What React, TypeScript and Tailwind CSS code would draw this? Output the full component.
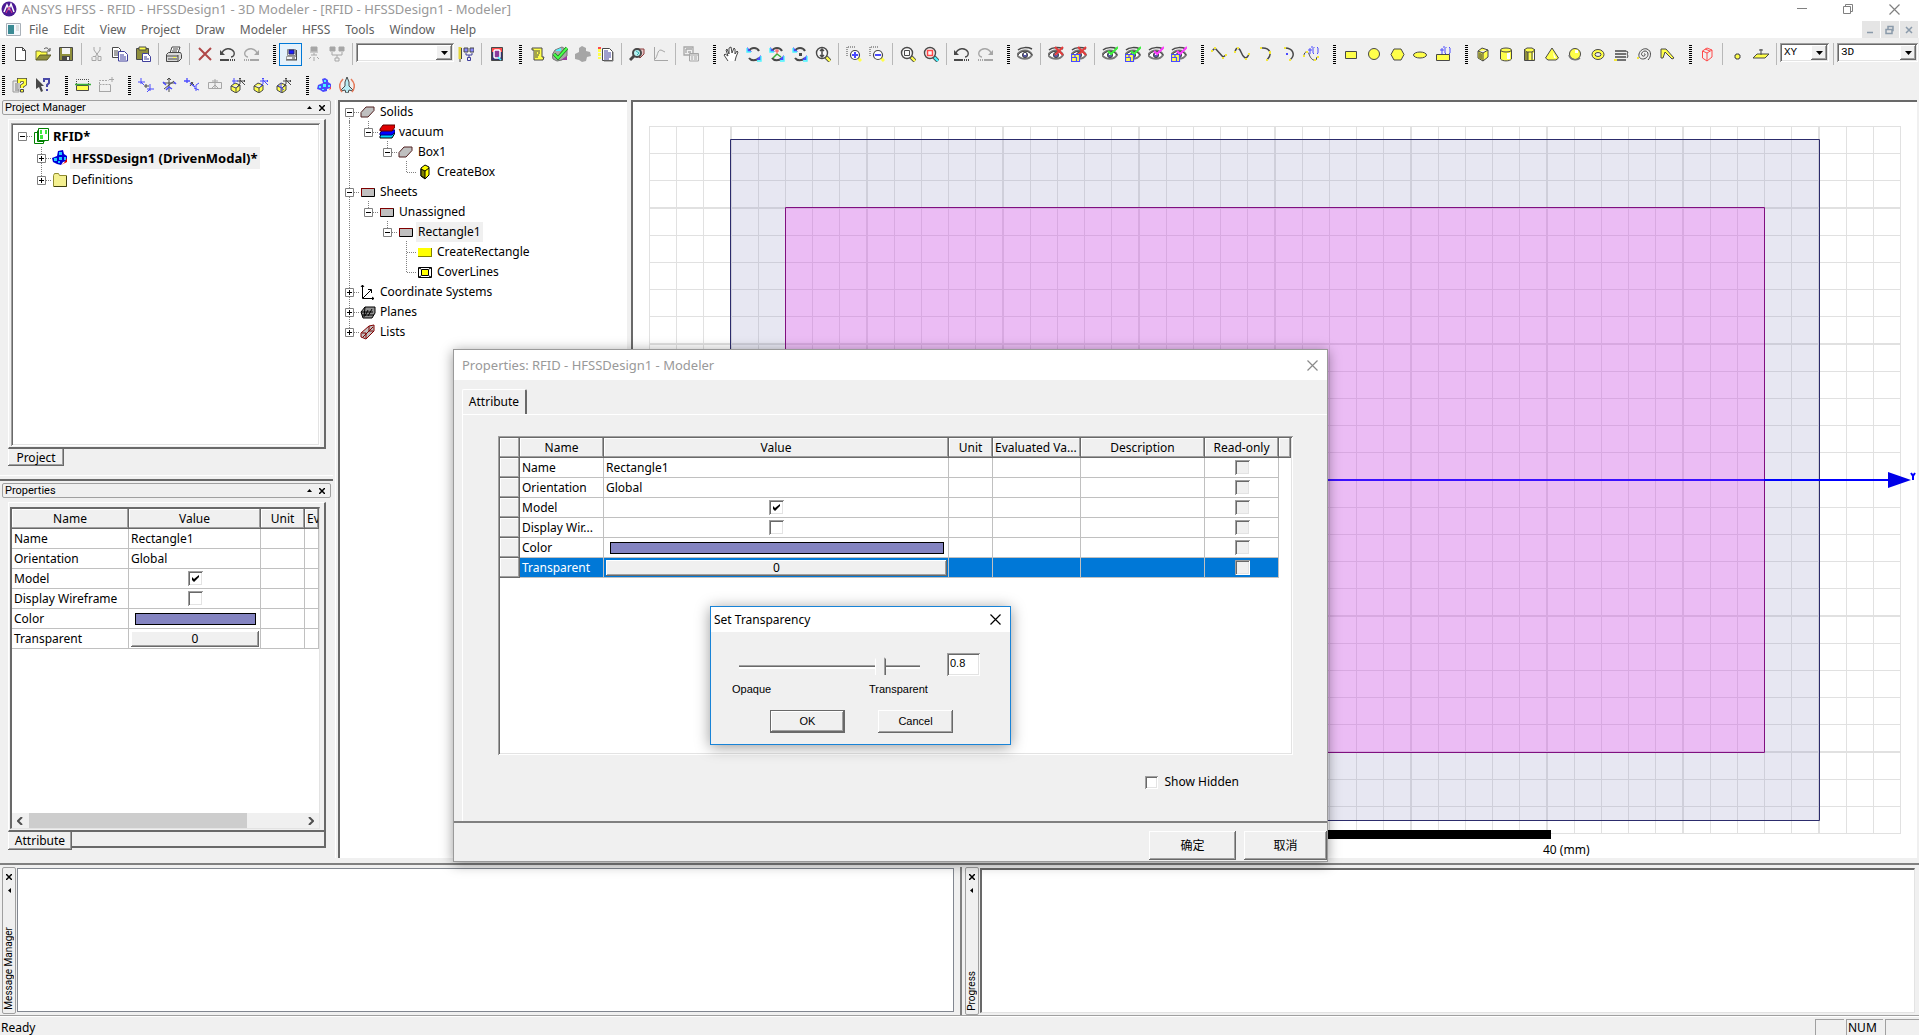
import { clsx } from "clsx";
import { useState, type ReactNode } from "react";

const DARK = "#484848";
const GRAY = "#a6a6a6";
const YELLOW = "#ffff4a";
const BLUE = "#4a4aff";

const RAISED =
    "bg-[#f0f0f0] shadow-[inset_-1px_-1px_#696969,inset_1px_1px_#ffffff,inset_-2px_-2px_#a0a0a0]";
const SUNKEN =
    "shadow-[inset_1px_1px_#a0a0a0,inset_-1px_-1px_#ffffff,inset_2px_2px_#696969,inset_-2px_-2px_#e3e3e3]";

/* ---------- icon parts ---------- */

const eye = (
    <>
        <path d="M1 4C4 1 11 1 15 3" stroke={DARK} strokeWidth="1.5" fill="none" />
        <path d="M0 9C4 3 12 3 15 9C12 14 4 14 0 9Z" fill="#fff" stroke="#777" strokeWidth="2" />
        <path d="M1 9C4 4 12 4 15 9" stroke={DARK} strokeWidth="1" fill="none" />
        <circle cx="8" cy="9" r="2.6" fill="#5a5aa8" stroke={DARK} />
        <path d="M7 7h2v2h-2z" fill="#fff" />
    </>
);

const lens = (handle = YELLOW) => (
    <>
        <path d="M11 11l4 4" stroke={DARK} strokeWidth="4" />
        <path d="M11 11l4 4" stroke={handle} strokeWidth="2.4" />
        <circle cx="7" cy="7" r="5.5" fill="#f8f8f8" stroke={DARK} strokeWidth="1.4" />
    </>
);

const smallLens = (
    <>
        <path d="M1 10V1H10" stroke={DARK} strokeDasharray="1 1" fill="none" />
        <path d="M12 12l3 3" stroke={YELLOW} strokeWidth="3" />
        <circle cx="9" cy="9" r="4.5" fill="#fff" stroke={DARK} strokeWidth="1.2" />
    </>
);

const spin = (
    <>
        <path d="M3 5C5 1 11 1 13 5M3 12C5 15 10 15 13 12" stroke={DARK} strokeWidth="2" fill="none" />
        <path d="M1 1v5h5z" fill={BLUE} />
        <path d="M1 2v4h4" stroke="#4af4ff" strokeWidth="1.4" fill="none" />
        <path d="M15 9v5h-5z" fill={BLUE} />
        <path d="M15 10v5h-4" stroke="#4af4ff" strokeWidth="1.4" fill="none" />
    </>
);

const undoShape = (color: string) => (
    <>
        <path d="M2 7C4 2 11 1 14 6C15 9 13 11 11 11" stroke={color} strokeWidth="1.4" fill="none" />
        <path d="M0 4v5h5z" fill={color} />
        <path d="M0 14h9M10 14h1M12 14h1M14 14h1" stroke={color} strokeWidth="2" />
    </>
);

const redoShape = (color: string) => (
    <>
        <path d="M14 7C12 2 5 1 2 6C1 9 3 11 5 11" stroke={color} strokeWidth="1.4" fill="none" />
        <path d="M16 4v5h-5z" fill={color} />
        <path d="M7 14h9M5 14h1M3 14h1M1 14h1" stroke={color} strokeWidth="2" />
    </>
);

const cluster = (
    <>
        <path d="M2 8L7 6L6 2L9 1L12 3V5L15 7V11L11 12V14L7 15L4 13L1 12Z" fill={BLUE} />
        <path d="M9 15L15 12V9L13 13Z" fill="#ff4a4a" />
        <path d="M8 3h2v2h-2zM3 9h2v2H3zM7 7h3v3H7zM12 8h2v2h-2zM6 12h2v1H6z" fill="#4af4ff" />
    </>
);

const yellowBox = (
    <path d="M1 9L5 6L10 8V13L6 16L1 13ZM1 9L6 11L10 8M6 11V16" fill={YELLOW} stroke={DARK} />
);

const miniAxes = (color: string) => (
    <path d="M10 1v6M7 4h8M9 2l1-1l1 1M14 3l1 1l-1 1M10 7l-3 3M10 3l5 5" stroke={color} fill="none" />
);

const yellowPlate = (
    <path d="M0.5 8.5h8v7h-8zM0.5 11.5h5v4M4 8.5v3" fill={YELLOW} stroke={BLUE} strokeWidth="1.2" />
);

const tick = (color: string) => (
    <path d="M6 5l3 3L16 1" stroke={color} strokeWidth="2" fill="none" />
);

const cross = <path d="M7 1l8 8M15 1L7 9" stroke="#e53c3c" strokeWidth="2" fill="none" />;

const fx = (
    <path d="M8 1h2M7 8V2M5 4h4M10 2v5l1 1M14 1l1 1v5l-1 1M11 1v1" stroke={BLUE} fill="none" />
);

const icons: Record<string, ReactNode> = {
    new: <path d="M3.5 1.5h7l3 3v10h-10zM10.5 1.5v3h3" fill="#fff" stroke={DARK} />,
    open: (
        <>
            <path d="M1 14V5h4l1 1h6v3" fill={YELLOW} stroke="#77773a" />
            <path d="M1 14L5 9H16L12 14Z" fill="#8f8f3c" stroke="#5c5c2a" />
            <path d="M9 3c2-2 4-1 5 1M15 2v3h-3" stroke={DARK} fill="none" />
        </>
    ),
    save: (
        <>
            <path d="M1.5 1.5h13v13h-13z" fill="#8f8f3c" stroke={DARK} />
            <path d="M4 2h8v6H4z" fill="#f4f4f4" />
            <path d="M4 10h8v5H4z" fill={DARK} />
            <path d="M9 11h2v3H9z" fill="#f4f4f4" />
        </>
    ),
    cut: (
        <path d="M5 1v3l5 7M11 1v3l-5 7M4 10.5h3v4H3v-3zM9 10.5h3v4H9z" stroke={GRAY} fill="none" />
    ),
    copy: (
        <>
            <path d="M0.5 1.5h6l2 2v8h-8zM2 5h4M2 7h4M2 9h4" fill="#fff" stroke={DARK} />
            <path d="M6.5 5.5h6l3 3v6.5h-9z" fill="#fff" stroke="#3f3f9c" />
            <path d="M8 9h4M8 11h6M8 13h6" stroke="#3f3f9c" />
        </>
    ),
    paste: (
        <>
            <path d="M1.5 2.5h12v11h-12z" fill="#8f8f3c" stroke={DARK} />
            <path d="M4 1h7v3H4z" fill={YELLOW} stroke={DARK} />
            <path d="M7.5 7.5h5l3 3v5h-8z" fill="#fff" stroke="#3f3f9c" />
            <path d="M9 11h3M9 13h5" stroke="#3f3f9c" />
        </>
    ),
    print: (
        <>
            <path d="M4 7L6 1h8l-2 6" fill="#fff" stroke={DARK} />
            <path d="M7 3h5M6 5h5" stroke={DARK} />
            <path d="M0.5 8.5l2-2h12l1 2v4l-3 3h-12z" fill="#d8d8d8" stroke={DARK} />
            <path d="M1 10h11M2 13h9M12 9v6" stroke={DARK} />
            <path d="M7 11h3v1H7z" fill={YELLOW} />
        </>
    ),
    delete: <path d="M2 2l12 12M14 2L2 14" stroke="#b04848" strokeWidth="2" fill="none" />,
    undo: undoShape(DARK),
    redo: redoShape(GRAY),
    pc: (
        <>
            <path d="M4.5 3.5h8v6h-8z" fill="#e4e4e4" stroke="#8a8a8a" />
            <path d="M6 4h5v4H6z" fill="#1c1cff" stroke="#24246c" />
            <path d="M3.5 10.5h10v3h-10z" fill="#f4f4f4" stroke="#9a9a9a" />
            <path d="M13.5 4v10M3 14h11M9 12h3" stroke={DARK} />
        </>
    ),
    netOne: (
        <path d="M5 1h6v4H5zM5 3h6M4 6h8M8 7v2M5 9h6M5 11l-2 2M8 11v4M11 11l2 2" fill={GRAY} stroke={GRAY} />
    ),
    netTwo: (
        <>
            <path d="M1 1h5v4H1zM10 1h5v4h-5z" fill={GRAY} stroke={GRAY} />
            <path d="M3 6v3h10V6M8 9v3M6 12h4v3H6z" fill="none" stroke={GRAY} />
        </>
    ),
    pencilNet: (
        <>
            <path d="M2 1v12" stroke="#e5d63a" strokeWidth="3" />
            <path d="M3.5 2v11M2 13v3" stroke={DARK} />
            <path d="M6 2h4v4H6zM12 2h4v4h-4z" fill="#8a8aff" stroke={DARK} />
            <path d="M8 7v2h6V7M11 9v2M9.5 11.5h3v3h-3z" fill="none" stroke="#3f3f9c" />
        </>
    ),
    qLetter: (
        <>
            <path d="M2.5 1.5h11v13h-11z" fill="#33336c" stroke={DARK} />
            <path d="M3 2h10v4H3z" fill="#ff4a4a" />
            <path d="M6 4h4l1 1v6l-1 1H6l-1-1V5z" fill="#8a3a9c" stroke="#fff" strokeWidth="1.5" />
            <path d="M9 11l3 3" stroke="#4af4ff" strokeWidth="1.5" />
        </>
    ),
    scroll: (
        <>
            <path d="M3 2h10v9h2l-1 3H5V4H3z" fill={YELLOW} stroke={DARK} />
            <path d="M6 5h5M6 7h2M9 7h2M6 9h4M6 11h3" stroke={DARK} />
        </>
    ),
    validate: (
        <>
            <path d="M0 9l3-5l7-3l5 3v6l-5 4l-5 1l-4-2z" fill="#a8a8a8" stroke="#777" />
            <path d="M4 4l5-2v3H4z" fill="#4af4ff" />
            <path d="M9 14l6-4v4z" fill="#a03aa0" />
            <path d="M2 8l4 4L15 2" stroke="#1f7a1f" strokeWidth="3.5" fill="none" />
            <path d="M2 8l4 4L15 2" stroke="#4aff4a" strokeWidth="2" fill="none" />
        </>
    ),
    analyze: <path d="M0 8l4-2V2l3-2l4 2v3l4 1l1 4l-4 1l-1 4l-4 1l-3-2l-4-1z" fill={GRAY} />,
    notes: (
        <>
            <path d="M4.5 2.5h7l3 3v9h-10z" fill="#fff" stroke={DARK} />
            <path d="M6 5h4M6 7h7M6 9h7M6 11h7M6 13h5" stroke="#3f3f9c" />
            <path d="M1.5 3v10" stroke="#ffff4a" strokeWidth="3" strokeDasharray="3 1" />
            <path d="M0 1h3v2H0z" fill="#ff4a4a" />
            <path d="M15 6v9H6" stroke="#777" fill="none" />
        </>
    ),
    results: (
        <>
            <path d="M4 6l3-3h8v5l-4 4z" fill="#e8c8c8" stroke="#8a3a3a" />
            <circle cx="8" cy="7" r="4" fill="#b8f4f4" stroke={DARK} strokeWidth="2" />
            <path d="M5 10L1 14" stroke={DARK} strokeWidth="3" />
            <path d="M7 5l3 2l-2 2" stroke="#3ab0b0" fill="none" />
        </>
    ),
    plot: <path d="M2.5 1v13.5H16M3 13C6 10 5 4 9 4L13 6" stroke={GRAY} fill="none" />,
    layers: (
        <>
            <path d="M1 1h9v8H1zM3 3h6M3 3v4M5 6h3" fill="none" stroke={GRAY} strokeWidth="1.3" />
            <path d="M6.5 7.5h9v7.5h-9zM7 9h8M8 11h2M11 11h3M8 13h2M11 13h3" fill="#f0f0f0" stroke={GRAY} />
        </>
    ),
    pan: (
        <path
            d="M5 15L1 9L2 8L5 10L3 4L4 3L6 8V2L8 1L9 7L11 2L12 3V8L14 5L15 6L13 11L12 15"
            fill="#fff"
            stroke={DARK}
        />
    ),
    rotate: spin,
    rotateAxes: (
        <>
            {spin}
            <path d="M8 3v5M6 5h4" stroke="#ff4a4a" fill="none" />
            <path d="M8 8l-4 4M8 8l4 3" stroke="#3ab03a" strokeWidth="1.5" fill="none" />
        </>
    ),
    rotateDot: (
        <>
            {spin}
            <path d="M7 7h3v3H7z" fill={DARK} />
        </>
    ),
    zoom: (
        <>
            {lens()}
            <path d="M7 3v8M5 5l2-2l2 2M5 9l2 2l2-2" stroke={DARK} strokeWidth="1.5" fill="none" />
        </>
    ),
    zoomIn: (
        <>
            {smallLens}
            <path d="M9 6v6M6 9h6" stroke={BLUE} strokeWidth="2" />
        </>
    ),
    zoomOut: (
        <>
            {smallLens}
            <path d="M6 9h6" stroke={BLUE} strokeWidth="2" />
        </>
    ),
    fitAll: (
        <>
            {lens()}
            <path d="M4.5 4.5h5v5h-5z" stroke={DARK} fill="none" />
        </>
    ),
    fitSel: (
        <>
            {lens("#4af4ff")}
            <path d="M4.5 4.5h5v5h-5z" stroke="#ff4a4a" strokeWidth="1.5" fill="none" />
        </>
    ),
    eye,
    eyeCross: <>{eye}{cross}</>,
    eyeCrossBox: <>{eye}{cross}{yellowPlate}</>,
    eyeTick: <>{eye}{tick("#3cf03c")}</>,
    eyeTickBox: <>{eye}{tick("#3cf03c")}{yellowPlate}</>,
    eyeTickPink: <>{eye}{tick("#ff3cff")}</>,
    eyeTickPinkBox: <>{eye}{tick("#ff3cff")}{yellowPlate}</>,
    line: (
        <>
            <path d="M1 5L4 2L12 11L15 9" stroke={DARK} strokeWidth="1.5" fill="none" />
            <path d="M0 4h2v2H0zM3 1h2v2H3zM11 11h2v2h-2zM14 8h2v2h-2z" fill="#f4e83a" />
        </>
    ),
    spline: (
        <>
            <path d="M1 6C2 1 5 1 7 6S12 15 15 8" stroke={DARK} strokeWidth="1.5" fill="none" />
            <path d="M0 5h2v2H0zM3 1h2v2H3zM11 12h2v2h-2zM14 7h2v2h-2z" fill="#f4e83a" />
        </>
    ),
    arc3: (
        <>
            <path d="M4 2C13 1 16 8 10 14" stroke={DARK} strokeWidth="1.5" fill="none" />
            <path d="M3 1h2v2H3zM12 5h2v3h-2zM9 13h2v2H9z" fill="#f4e83a" />
        </>
    ),
    arcCenter: (
        <>
            <path d="M5 2C13 2 16 9 10 14" stroke={DARK} strokeWidth="1.5" fill="none" />
            <path d="M4 1h2v2H4zM9 13h2v2H9z" fill="#f4e83a" />
            <path d="M6 7h2v2H6z" fill={BLUE} />
        </>
    ),
    equation: (
        <>
            <path d="M1 10C1 5 5 5 6 8S9 15 13 14L14 11" stroke={DARK} fill="none" />
            <path d="M0 9h2v2H0zM3 5h2v2H3zM11 13h2v2h-2zM14 10h2v2h-2z" fill="#f4e83a" />
            {fx}
        </>
    ),
    rect: <path d="M2.5 5.5h11v7h-11z" fill={YELLOW} stroke={DARK} />,
    circle: <circle cx="8" cy="8" r="5.5" fill={YELLOW} stroke={DARK} />,
    polygon: <path d="M2 8.5L5 3h7l3 5.5L12 14H5z" fill={YELLOW} stroke={DARK} />,
    ellipse: <ellipse cx="8" cy="9" rx="6.5" ry="3" fill={YELLOW} stroke={DARK} />,
    eqSurface: (
        <>
            <path d="M1.5 8.5h13v6h-13z" fill={YELLOW} stroke={DARK} />
            {fx}
        </>
    ),
    box: (
        <>
            <path d="M3 5L7 2L13 4V11L8 15L3 12ZM3 5L8 7L13 4M8 7V15" fill={YELLOW} stroke={DARK} />
            <path d="M3.5 6l4 2v6l-4-2z" fill="#8f8f3c" />
        </>
    ),
    cylinder: (
        <>
            <path d="M2.5 4v9C4 15.5 12 15.5 13.5 13V4" fill={YELLOW} stroke={DARK} />
            <path d="M9 7h3v6H9z" fill="#fff" />
            <ellipse cx="8" cy="4" rx="5.5" ry="2" fill={YELLOW} stroke={DARK} />
        </>
    ),
    prism: (
        <>
            <path d="M3.5 3.5h10v11h-10z" fill={YELLOW} stroke={DARK} />
            <path d="M4 6h3v8H4z" fill="#8f8f3c" />
            <path d="M3 4l3-2h5l3 2l-3 2H6zM7 6v9M11 6v9" fill={YELLOW} stroke={DARK} />
            <path d="M12 7h1v6h-1z" fill="#fff" />
        </>
    ),
    cone: (
        <>
            <path d="M8 2L14.5 12L12 14H4L1.5 12Z" fill={YELLOW} stroke={DARK} />
            <path d="M9 6l3 6h-2z" fill="#fff" />
        </>
    ),
    sphere: (
        <>
            <circle cx="8" cy="8" r="5.5" fill={YELLOW} stroke={DARK} />
            <path d="M2 9C3 14 10 15 13 12" stroke="#777" strokeWidth="1.5" fill="none" />
            <path d="M8 4h3v3H8z" fill="#fff" />
        </>
    ),
    torus: (
        <>
            <ellipse cx="8" cy="8.5" rx="6" ry="5" fill={YELLOW} stroke={DARK} />
            <ellipse cx="8" cy="8.5" rx="3" ry="2" fill="#f0f0f0" stroke={DARK} />
        </>
    ),
    helix: (
        <>
            <path d="M2 5h11M2 8h11M2 11h11M2 14h11" stroke={DARK} strokeWidth="1.5" />
            <path d="M13 5l2 1l-1 2l1 2l-1 2" stroke={DARK} fill="none" />
            <path d="M1 13h3v2H1z" fill="#f4e83a" />
        </>
    ),
    spiral: (
        <>
            <path
                d="M8 8C10 7 9 11 7 10C4 9 6 5 9 5C13 5 13 11 9 12.5C6 14 2 12 3 8C4 4 8 2 11 3C16 5 15 11 12 14"
                stroke={DARK}
                fill="none"
            />
            <path d="M1 11h2v2H1z" fill="#f4e83a" />
        </>
    ),
    bond: <path d="M2 3h5L15 12L13 13L6 6L4 12H2z" fill={YELLOW} stroke={DARK} />,
    region: (
        <path d="M3.5 5L8 2L13 4V11L8 15L3.5 12ZM3.5 5L8 7L13 4M8 7V15M6 3l5 2" fill="none" stroke="#ff4a4a" />
    ),
    point: <path d="M6 8h3v1h1v3H9v1H6v-1H5V9h1z" fill={YELLOW} stroke={DARK} />,
    plane: (
        <>
            <path d="M4 8h12l-4 4H0z" fill={YELLOW} stroke={DARK} />
            <path d="M8 3v6M6 4h4" stroke={DARK} fill="none" />
        </>
    ),
    helpDoc: (
        <>
            <path d="M1 4h6v11H1z" fill="#e8e8e8" stroke="#999" />
            <path d="M3 7h3M3 9h3M3 11h3M3 13h4" stroke="#777" />
            <path d="M7 6V3h6v4l-3 2v2" stroke={DARK} strokeWidth="4" fill="none" />
            <path d="M7 6V3h6v4l-3 2v2" stroke="#ffff3a" strokeWidth="2.5" fill="none" />
            <path d="M8.5 12.5h3v2.5h-3z" fill="#ffff3a" stroke={DARK} />
        </>
    ),
    helpArrow: (
        <>
            <path d="M1 1v11l3-2l2 5l2-1l-2-5h3z" fill={DARK} />
            <path d="M9 5V2h5v4l-2 2v2M12 12v2" stroke="#4a4aa8" strokeWidth="2" fill="none" />
        </>
    ),
    section: (
        <>
            <path d="M1.5 7V2.5h12V7" stroke={DARK} strokeDasharray="1 1" fill="none" />
            <path d="M1.5 8.5h12v5h-12z" fill={YELLOW} stroke={DARK} />
            <path d="M0 7.5h16" stroke="#3ab03a" strokeWidth="1.5" />
        </>
    ),
    sectionAdd: (
        <>
            <path d="M1.5 7V3.5h9M1.5 14.5h11v-7h-11z" stroke={GRAY} strokeDasharray="2 1" fill="none" />
            <path d="M1 14.5h12M1.5 8v6M12.5 8v6M14 0v5M11 2.5h5" stroke={GRAY} fill="none" />
        </>
    ),
    csMove: (
        <>
            <path d="M3 1v6M0 5h7M3 5l3 3" stroke={BLUE} fill="none" />
            <path d="M8 7v4M6 9h5" stroke={DARK} fill="none" />
            <path d="M12 7v7M9 12h7M12 12l-3 3" stroke={BLUE} fill="none" />
        </>
    ),
    csRotate: (
        <>
            <path d="M8 1v14M6 3l2-2l2 2M2 6h12M3 12l10-8" stroke={DARK} fill="none" />
            <path d="M2 5l3 3M13 5l2 2M5 13l3-3l3 2" stroke={BLUE} strokeWidth="1.5" fill="none" />
        </>
    ),
    csBoth: (
        <>
            <path d="M3 1v5M0 4h6M6 6l5 4" stroke={BLUE} strokeWidth="1.3" fill="none" />
            <path d="M7 5l3 3M9 5l-3 4" stroke={DARK} fill="none" />
            <path d="M12 8l3-2M10 11l5 2M12 8v6" stroke={BLUE} fill="none" />
        </>
    ),
    csOff: <path d="M1.5 5.5h13v6h-13zM8 2v9M5 4h6M5 11l3-3l3 3" stroke={GRAY} fill="none" />,
    faceCs: <>{yellowBox}{miniAxes(DARK)}<path d="M4 1v6M2 4h6" stroke={BLUE} /></>,
    faceCs2: <>{yellowBox}{miniAxes(BLUE)}</>,
    faceCs3: <>{yellowBox}{miniAxes(DARK)}<path d="M5 6v9M2 8l6 5" stroke={BLUE} /></>,
    cluster,
    plane3d: (
        <>
            <path d="M8 0l2 5v4l4 4v1l-4-1l-1 3H7l-1-3l-4 1v-1l4-4V5z" fill="#b8ecf4" stroke={DARK} />
            <path d="M4 2C0 6 0 11 3 15M12 2C16 6 16 11 13 15" stroke="#e57c5c" strokeWidth="1.5" fill="none" />
        </>
    ),
    // tree icons
    project: (
        <>
            <path d="M1.5 4.5h9v11h-9z" fill="#fff" stroke="#008000" />
            <path d="M5.5 0.5h10v12h-10z" fill="#fff" stroke="#008000" />
            <path d="M4.5 2.5v11h7" stroke="#008000" fill="none" />
            <path d="M7 3h2M7 5h2M12 3h2M12 5h2M7 8h3M7 10h3" stroke="#00e000" strokeWidth="1.5" />
        </>
    ),
    design: (
        <>
            <path d="M0 8L5 6L6 1L11 0L12 4L15 6V11L11 12L9 15L5 14L1 12Z" fill="#0000d8" />
            <path d="M9 15L15 12V8L12 13Z" fill="#e00000" />
            <path d="M7 2h3v3H7zM2 8h3v3H2zM7 7h3v3H7zM12 7h2v3h-2zM6 11h2v2H6z" fill="#20c8ff" />
        </>
    ),
    folder: (
        <>
            <path d="M1.5 14.5v-11l1-2h4l1 2h7v11z" fill="#f4f090" stroke="#908c30" />
            <path d="M2 14.5h12.500V4" stroke="#404010" fill="none" />
        </>
    ),
    solid: <path d="M1 13V8.5L6 3H14V6.5L8 13Z" fill="#c0c0c0" stroke="#502020" />,
    material: (
        <>
            <path d="M1 12l3-3h12l-3 5H1z" fill="#00d8ff" stroke="#000" />
            <path d="M1 9l3-3h12v2l-3 3H1z" fill="#0000ff" stroke="#000080" />
            <path d="M1 5l3-4h12v2l-3 4H1z" fill="#e00000" stroke="#600000" />
        </>
    ),
    boxOp: (
        <>
            <path d="M4 4L8 1L12 3V11L8 15L4 12Z" fill="#ffff00" stroke="#000" />
            <path d="M4 5l4 2v7l-4-2z" fill="#808000" stroke="#000" />
            <path d="M8 7l4-3" stroke="#000" />
        </>
    ),
    sheet: (
        <>
            <path d="M1.5 4.5h13v8h-13z" fill="#c0c0c0" stroke="#000" />
            <path d="M1.5 12V4.5H14" stroke="#800000" fill="none" />
        </>
    ),
    rectOp: (
        <>
            <path d="M1 4h14v8H1z" fill="#ffff00" />
            <path d="M1 12.5h14M14.5 4v9" stroke="#808000" />
        </>
    ),
    cover: (
        <>
            <path d="M1.5 3.5h13v10h-13z" fill="#fff" stroke="#000" />
            <path d="M4.5 5.5h7v6h-7z" fill="#ffff00" stroke="#000" />
            <path d="M2 4l2 1M14 4l-2 1M2 13l2-1M14 13l-2-1" stroke="#000" />
        </>
    ),
    axes: <path d="M2.5 1v13.5H14M1 3l1.5-2L4 3M12 13l2 1.5l-2 1.5M3 14L11 6M8 5.5h3.5v3.5" stroke="#000" fill="none" />,
    planes: (
        <>
            <path d="M1 8l4-5h10v6l-3 5H3z" fill="#909090" stroke="#000" />
            <path d="M1 8h12M5 3l-1 10M2 11h12M8 6l-3 6M12 5l-4 7" stroke="#000" fill="none" />
        </>
    ),
    lists: (
        <>
            <path d="M1 9L9 2L14 1V7L6 15L1 13Z" fill="#c0c0c0" stroke="#800000" />
            <path d="M3 13L13 3M2 9h4v5M9 2v5h4" stroke="#800000" fill="none" />
        </>
    ),
};

function Icon({ name }: { name: string }) {
    return (
        <svg width="16" height="16" viewBox="0 0 16 16" className="shrink-0" aria-hidden="true">
            {icons[name]}
        </svg>
    );
}

/* ---------- toolbars ---------- */

type Tool = string | { combo: string; label: string; width: string };

// "|" is a separator
const topBands: Tool[][] = [
    ["new", "open", "save", "|", "cut", "copy", "paste", "|", "print", "|", "delete", "undo", "redo"],
    ["pc", "netOne", "netTwo", "|", { combo: "", label: "Machine", width: "w-[98px]" }, "pencilNet", "|", "qLetter"],
    ["scroll", "validate", "analyze", "notes", "|", "results", "plot", "|", "layers"],
    ["pan", "rotate", "rotateAxes", "rotateDot", "zoom", "|", "zoomIn", "zoomOut", "|", "fitAll", "fitSel", "|", "undo", "redo"],
    ["eye", "|", "eyeCross", "eyeCrossBox", "|", "eyeTick", "eyeTickBox", "eyeTickPink", "eyeTickPinkBox"],
    ["line", "spline", "arc3", "arcCenter", "equation"],
    ["rect", "circle", "polygon", "ellipse", "eqSurface"],
    ["box", "cylinder", "prism", "cone", "sphere", "torus", "helix", "spiral", "bond"],
    [
        "region",
        "|",
        "point",
        "plane",
        "|",
        { combo: "XY", label: "Drawing plane", width: "w-[49px]" },
        "|",
        { combo: "3D", label: "Movement mode", width: "min-w-[78px] flex-1" },
    ],
];

const secondBands: Tool[][] = [
    ["helpDoc", "helpArrow"],
    ["section", "sectionAdd"],
    ["csMove", "csRotate", "csBoth", "csOff", "faceCs", "faceCs2", "faceCs3"],
    ["cluster", "plane3d"],
];

function Combo({ value, label, width }: { value: string; label: string; width: string }) {
    return (
        <div className={clsx("relative mb-[3px] h-[19px] shrink-0", width)}>
            <select
                aria-label={label}
                className={clsx(
                    "block h-full w-full appearance-none bg-white pl-1 font-['Liberation_Mono',monospace] text-[11px] leading-[19px] text-black outline-none",
                    SUNKEN,
                )}
            >
                <option>{value}</option>
            </select>
            <span
                className={clsx(
                    "pointer-events-none absolute top-0.5 right-0.5 bottom-0.5 flex w-4 items-center justify-center",
                    RAISED,
                )}
            >
                <svg width="7" height="4" viewBox="0 0 7 4">
                    <path d="M0 0h7L3.5 4z" fill="#000" />
                </svg>
            </span>
        </div>
    );
}

function Toolbar({ bands }: { bands: Tool[][] }) {
    return (
        <div className="flex h-full gap-[9px] overflow-hidden pr-px">
            {bands.map((band, i) => (
                <div key={i} className="flex shrink-0 items-center last:flex-1">
                    <div className="mr-[3px] ml-0.5 h-[19px] w-[3px] shrink-0 bg-[repeating-linear-gradient(#000_0_1px,transparent_1px_2px)]" />
                    {band.map((tool, j) => {
                        if (typeof tool !== "string") {
                            return <Combo key={j} value={tool.combo} label={tool.label} width={tool.width} />;
                        }
                        if (tool === "|") {
                            return (
                                <div key={j} className="flex w-2 shrink-0 justify-center">
                                    <div className="h-[22px] w-px bg-[#b8b8b8]" />
                                </div>
                            );
                        }
                        return (
                            <button
                                key={j}
                                aria-label={tool}
                                className={clsx(
                                    "flex size-[23px] shrink-0 items-center justify-center",
                                    tool === "pc" && "border border-[#0078d7] bg-[#e5f1fb]",
                                )}
                            >
                                <Icon name={tool} />
                            </button>
                        );
                    })}
                </div>
            ))}
        </div>
    );
}

/* ---------- trees ---------- */

type Row = {
    // one letter per level: v line, t tee, l elbow, r first root, n lone root, _ blank
    guides: string;
    state?: "+" | "-";
    icon: string;
    text: string;
    bold?: boolean;
    selected?: boolean;
};

const projectRows: Row[] = [
    { guides: "n", state: "-", icon: "project", text: "RFID*", bold: true },
    { guides: "_t", state: "+", icon: "design", text: "HFSSDesign1 (DrivenModal)*", bold: true, selected: true },
    { guides: "_l", state: "+", icon: "folder", text: "Definitions" },
];

const modelRows: Row[] = [
    { guides: "r", state: "-", icon: "solid", text: "Solids" },
    { guides: "vl", state: "-", icon: "material", text: "vacuum" },
    { guides: "v_l", state: "-", icon: "solid", text: "Box1" },
    { guides: "v__l", icon: "boxOp", text: "CreateBox" },
    { guides: "t", state: "-", icon: "sheet", text: "Sheets" },
    { guides: "vl", state: "-", icon: "sheet", text: "Unassigned" },
    { guides: "v_l", state: "-", icon: "sheet", text: "Rectangle1", selected: true },
    { guides: "v__t", icon: "rectOp", text: "CreateRectangle" },
    { guides: "v__l", icon: "cover", text: "CoverLines" },
    { guides: "t", state: "+", icon: "axes", text: "Coordinate Systems" },
    { guides: "t", state: "+", icon: "planes", text: "Planes" },
    { guides: "l", state: "+", icon: "lists", text: "Lists" },
];

const guidePaths: Record<string, string> = {
    v: "M9.5 0V22",
    t: "M9.5 0V22M10 11.5H19",
    l: "M9.5 0V11M10 11.5H19",
    r: "M9.5 11V22M10 11.5H19",
    n: "M10 11.5H19",
    _: "",
};

function Tree({ rows, rowHeight, label }: { rows: Row[]; rowHeight: string; label: string }) {
    return (
        <ul aria-label={label}>
            {rows.map((row) => (
                <li key={row.guides + row.text} className={clsx("flex items-center", rowHeight)}>
                    {row.guides.split("").map((guide, i) => (
                        <svg key={i} width="19" height="22" viewBox="0 0 19 22" className="shrink-0">
                            <path d={guidePaths[guide]} stroke="#808080" strokeDasharray="1 1" fill="none" />
                            {row.state && i === row.guides.length - 1 && (
                                <>
                                    <path d="M5.5 7.5h8v8h-8z" fill="#fff" stroke="#808080" />
                                    <path d={row.state === "+" ? "M7 11.5h5M9.5 9v5" : "M7 11.5h5"} stroke="#000" />
                                </>
                            )}
                        </svg>
                    ))}
                    <span className="ml-px">
                        <Icon name={row.icon} />
                    </span>
                    <span
                        className={clsx(
                            "ml-0.5 flex h-full items-center px-0.5 whitespace-nowrap",
                            row.bold && "text-[13px] font-bold",
                            row.selected && "bg-[#f0f0f0]",
                        )}
                    >
                        {row.text}
                    </span>
                </li>
            ))}
        </ul>
    );
}

/* ---------- property grids ---------- */

function Check({
    label,
    checked = false,
    disabled = false,
    small = false,
}: {
    label: string;
    checked?: boolean;
    disabled?: boolean;
    small?: boolean;
}) {
    const [on, setOn] = useState(checked);
    return (
        <span className="relative flex">
            <input
                type="checkbox"
                aria-label={label}
                checked={on}
                disabled={disabled}
                onChange={(e) => setOn(e.target.checked)}
                className={clsx(
                    "peer appearance-none",
                    small ? "size-[13px]" : "size-[15px]",
                    disabled ? "bg-[#f0f0f0]" : "bg-white",
                    SUNKEN,
                )}
            />
            <svg
                width="7"
                height="7"
                viewBox="0 0 7 7"
                className="pointer-events-none absolute top-1 left-1 hidden peer-checked:block"
            >
                <path d="M0 2v3l2 2L7 2V0L2 4z" fill="#000" />
            </svg>
        </span>
    );
}

const properties = [
    { name: "Name", value: "Rectangle1" },
    { name: "Orientation", value: "Global" },
    { name: "Model", kind: "check", checked: true },
    { name: "Display Wireframe", short: "Display Wir...", kind: "check" },
    { name: "Color", kind: "color" },
    { name: "Transparent", kind: "button", value: "0" },
];

function PropertyValue({ item }: { item: (typeof properties)[number] }) {
    if (item.kind === "check") {
        return (
            <div className="flex justify-center">
                <Check label={item.name} checked={item.checked} />
            </div>
        );
    }
    if (item.kind === "color") {
        return (
            <button
                aria-label="Color"
                className="mx-1 block h-3 w-[calc(100%-7px)] border border-black bg-[#8484c1]"
            />
        );
    }
    if (item.kind === "button") {
        return <button className={clsx("block h-4 w-full leading-4", RAISED)}>{item.value}</button>;
    }
    return <>{item.value}</>;
}

function Head({ children, left = false }: { children?: ReactNode; left?: boolean }) {
    return (
        <th
            className={clsx(
                "h-5 overflow-hidden border-r border-b border-[#696969] bg-[#f0f0f0] p-0 font-normal whitespace-nowrap shadow-[inset_-1px_-1px_#a0a0a0,inset_1px_1px_#ffffff]",
                left ? "pl-0.5 text-left" : "text-center",
            )}
        >
            {children}
        </th>
    );
}

const CELL = "h-5 overflow-hidden border-r border-b border-[#c0c0c0] pr-px pl-0.5 py-0 whitespace-nowrap";

function SideGrid() {
    return (
        <table className="w-full table-fixed border-separate border-spacing-0">
            <colgroup>
                <col className="w-[117px]" />
                <col className="w-[132px]" />
                <col className="w-11" />
                <col />
            </colgroup>
            <thead>
                <tr>
                    <Head>Name</Head>
                    <Head>Value</Head>
                    <Head>Unit</Head>
                    <Head left>Ev</Head>
                </tr>
            </thead>
            <tbody>
                {properties.map((item) => (
                    <tr key={item.name}>
                        <td className={CELL}>{item.name}</td>
                        <td className={CELL}>
                            <PropertyValue item={item} />
                        </td>
                        <td className={CELL} />
                        <td className={CELL} />
                    </tr>
                ))}
            </tbody>
        </table>
    );
}

function DialogGrid() {
    return (
        <table className="w-full table-fixed border-separate border-spacing-0">
            <colgroup>
                <col className="w-5" />
                <col className="w-[84px]" />
                <col />
                <col className="w-11" />
                <col className="w-[88px]" />
                <col className="w-[124px]" />
                <col className="w-[74px]" />
                <col className="w-3" />
            </colgroup>
            <thead>
                <tr>
                    <Head />
                    <Head>Name</Head>
                    <Head>Value</Head>
                    <Head>Unit</Head>
                    <Head left>Evaluated Va...</Head>
                    <Head>Description</Head>
                    <Head>Read-only</Head>
                    <Head />
                </tr>
            </thead>
            <tbody>
                {properties.map((item) => {
                    const active = item.name === "Transparent";
                    const cell = clsx(CELL, active && "bg-[#0078d7]");
                    return (
                        <tr key={item.name}>
                            <Head />
                            <td className={clsx(cell, active && "text-white")}>{item.short ?? item.name}</td>
                            <td className={cell}>
                                <PropertyValue item={item} />
                            </td>
                            <td className={cell} />
                            <td className={cell} />
                            <td className={cell} />
                            <td className={cell}>
                                <div className="flex justify-center">
                                    <Check label={`${item.name} read-only`} disabled />
                                </div>
                            </td>
                            <td />
                        </tr>
                    );
                })}
            </tbody>
        </table>
    );
}

/* ---------- docked panels ---------- */

function Caption({ title }: { title: string }) {
    return (
        <div className="mx-0.5 flex h-[15px] shrink-0 items-center rounded-[2px] border border-[#a0a0a0] px-0.5 font-[Roboto,sans-serif] text-[11px] leading-[13px]">
            <h2 className="flex-1">{title}</h2>
            <button aria-label={`Collapse ${title}`} className="mr-[7px]">
                <svg width="5" height="3" viewBox="0 0 5 3">
                    <path d="M0 3h5L2.5 0z" />
                </svg>
            </button>
            <button aria-label={`Close ${title}`} className="mr-[3px]">
                <svg width="6" height="6" viewBox="0 0 6 6">
                    <path d="M0 0l6 6M6 0L0 6" stroke="#000" strokeWidth="1.5" />
                </svg>
            </button>
        </div>
    );
}

function SideCaption({ title }: { title: string }) {
    return (
        <div className="ml-0.5 flex w-[14px] flex-col items-center rounded-[2px] border border-[#a0a0a0] pt-1.5 pb-[3px]">
            <button aria-label={`Close ${title}`}>
                <svg width="6" height="6" viewBox="0 0 6 6">
                    <path d="M0 0l6 6M6 0L0 6" stroke="#000" strokeWidth="1.5" />
                </svg>
            </button>
            <button aria-label={`Collapse ${title}`} className="mt-2">
                <svg width="3" height="5" viewBox="0 0 3 5">
                    <path d="M3 0v5L0 2.5z" />
                </svg>
            </button>
            <h2 className="mt-auto rotate-180 font-[Roboto,sans-serif] text-[10px] leading-3 [writing-mode:vertical-rl]">
                {title}
            </h2>
        </div>
    );
}

const FRAME =
    "mt-1 mr-[7px] ml-2 flex flex-col border-t border-r-2 border-l border-white border-r-[#696969]";
const TAB =
    "bg-[#f0f0f0] leading-4 shadow-[inset_-1px_-1px_#696969,inset_1px_0_#ffffff,inset_-2px_-2px_#a0a0a0]";

function Sidebar() {
    return (
        <aside className="flex w-[333px] shrink-0 flex-col">
            <section className="flex h-[376px] shrink-0 flex-col border-b border-white">
                <Caption title="Project Manager" />
                <div className={clsx(FRAME, "h-[330px] border-b-2 border-b-[#696969] pt-[3px] pr-1 pb-px pl-0.5")}>
                    <div className={clsx("flex-1 bg-white px-0.5 pt-0.5", SUNKEN)}>
                        <Tree rows={projectRows} rowHeight="h-[22px]" label="Projects" />
                    </div>
                </div>
                <button className={clsx("ml-2 h-[17px] w-14", TAB)}>Project</button>
            </section>
            <div className="mb-0.5 h-[5px] shrink-0 border-b-2 border-[#696969]" />
            <section className="flex min-h-0 flex-1 flex-col pb-2">
                <Caption title="Properties" />
                <div className={clsx(FRAME, "min-h-0 flex-1 border-b-2 border-b-[#696969] pt-1 pr-1 pb-px pl-px")}>
                    <div className="flex min-h-0 flex-1 flex-col border-t-2 border-r border-b border-l-2 border-[#696969] border-r-[#e3e3e3] border-b-[#e3e3e3] bg-white">
                        <div className="min-h-0 flex-1 overflow-hidden">
                            <SideGrid />
                        </div>
                        <div className="flex h-[15px] items-center bg-[#f0f0f0] px-[5px]">
                            <svg width="6" height="8" viewBox="0 0 6 8">
                                <path d="M5 0L1 4L5 8" stroke="#505050" strokeWidth="2" fill="none" />
                            </svg>
                            <div className="mx-[6px] flex-1 self-stretch">
                                <div className="h-full w-4/5 bg-[#cdcdcd]" />
                            </div>
                            <svg width="6" height="8" viewBox="0 0 6 8">
                                <path d="M1 0L5 4L1 8" stroke="#505050" strokeWidth="2" fill="none" />
                            </svg>
                        </div>
                    </div>
                </div>
                <div className="mr-[7px] ml-2 flex shrink-0 items-start">
                    <button className={clsx("h-[18px] w-16", TAB)}>Attribute</button>
                    <div className="h-4 flex-1 border-r-2 border-b-2 border-[#696969]" />
                </div>
            </section>
        </aside>
    );
}

/* ---------- 3D view ---------- */

const CELL_SIZE = 27.2;
const columns = Array.from({ length: 47 }, (_, i) => 649.4 + i * CELL_SIZE);
const lines = Array.from({ length: 27 }, (_, i) => 126.4 + i * CELL_SIZE);

function ModelView() {
    return (
        <main className="min-w-0 flex-1 overflow-hidden border-t-2 border-l-2 border-[#696969] bg-white">
            <svg width="1285" height="755" viewBox="633 102 1285 755" aria-label="Model view">
                <g stroke="#e1e1e1" shapeRendering="crispEdges">
                    {columns.map((x, i) => (
                        <path key={i} d={`M${Math.floor(x)} 126V834`} strokeWidth={i % 5 === 3 ? 2 : 1} />
                    ))}
                    {lines.map((y, i) => (
                        <path key={i} d={`M649 ${Math.floor(y)}H1901`} strokeWidth={i % 5 === 3 ? 2 : 1} />
                    ))}
                </g>
                <path d="M730.5 139.5h1089v681h-1089z" fill="#8888bf" fillOpacity="0.2" stroke="#2c2c6c" />
                <path d="M785.5 207.5h979v545h-979z" fill="#ff14ff" fillOpacity="0.2" stroke="#801080" />
                <path d="M1300 480H1890" stroke="#0000ff" strokeWidth="2" />
                <path d="M785 480H1764" stroke="#3c10ff" strokeWidth="2" />
                <path d="M1888 472L1911 480L1888 488Z" fill="#0000e8" />
                <path d="M1911 473L1913 476L1915 473M1913 476V480" stroke="#0000ff" strokeWidth="2" fill="none" />
                <path d="M1100 830H1551V839H1100Z" fill="#000" />
                <text x="1543" y="854" fontSize="12">
                    40 (mm)
                </text>
            </svg>
        </main>
    );
}

/* ---------- dialogs ---------- */

function CloseX({ color }: { color: string }) {
    return (
        <svg width="11" height="11" viewBox="0 0 11 11">
            <path d="M0.5 0.5l10 10M10.5 0.5l-10 10" stroke={color} strokeWidth="1.2" />
        </svg>
    );
}

function PropertiesDialog() {
    return (
        <div
            role="dialog"
            aria-label="Properties"
            className="absolute top-[349px] left-[453px] w-[875px] border border-[#9a9a9a] bg-[#f0f0f0] shadow-[0_2px_12px_rgba(0,0,0,0.4)]"
        >
            <div className="flex h-[30px] items-center justify-between bg-white pr-[9px] pl-2 text-[#999999]">
                <h2 className="text-[13px]">Properties: RFID - HFSSDesign1 - Modeler</h2>
                <button aria-label="Close">
                    <CloseX color="#8a8a8a" />
                </button>
            </div>
            <div className="pt-[9px] pl-2">
                <button className="block h-[25px] w-[65px] rounded-t-[2px] border-t border-r-2 border-l border-white border-r-[#696969] text-center">
                    Attribute
                </button>
                <div className="border-t border-l border-white pt-[21px] pl-[35px]">
                    <div className={clsx("h-[319px] w-[795px] bg-white p-0.5", SUNKEN)}>
                        <DialogGrid />
                    </div>
                    <div className="flex justify-end pt-[19px] pr-[88px] pb-[31px]">
                        <label className="flex items-center gap-1.5">
                            <Check label="Show Hidden" small />
                            Show Hidden
                        </label>
                    </div>
                </div>
            </div>
            <div className="flex justify-end gap-2 border-t-2 border-[#808080] pt-2 pb-px">
                <button className={clsx("h-[29px] w-[87px]", RAISED)}>确定</button>
                <button className={clsx("h-[29px] w-[83px]", RAISED)}>取消</button>
            </div>
        </div>
    );
}

function TransparencyDialog() {
    const [value, setValue] = useState("0.8");
    return (
        <div
            role="dialog"
            aria-label="Set Transparency"
            className="absolute top-[606px] left-[710px] w-[301px] border border-[#1883d7] bg-[#f0f0f0] shadow-[0_2px_14px_rgba(0,0,0,0.4)]"
        >
            <div className="flex h-[25px] items-center justify-between bg-white pr-[9px] pl-[3px]">
                <h2>Set Transparency</h2>
                <button aria-label="Close">
                    <CloseX color="#000" />
                </button>
            </div>
            <div className="px-5 pt-[21px] pb-[11px] font-['Liberation_Sans',sans-serif] text-[11px] leading-[14px]">
                <div className="flex items-center">
                    <input
                        type="range"
                        aria-label="Transparency"
                        min="0"
                        max="1"
                        step="0.1"
                        value={value}
                        onChange={(e) => setValue(e.target.value)}
                        className="ml-2 h-[23px] w-[181px] appearance-none bg-transparent bg-[linear-gradient(#a0a0a0_0_1px,#696969_1px_2px,#fff_2px_4px)] bg-[length:100%_4px] bg-[position:0_12px] bg-no-repeat outline-none [&::-webkit-slider-thumb]:h-[21px] [&::-webkit-slider-thumb]:w-[11px] [&::-webkit-slider-thumb]:appearance-none [&::-webkit-slider-thumb]:bg-[linear-gradient(90deg,#ffffff_0px,#ffffff_1px,#f0f0f0_1px,#f0f0f0_9px,#a0a0a0_9px,#a0a0a0_10px,#696969_10px)] [&::-webkit-slider-thumb]:[clip-path:polygon(50%_0,100%_5px,100%_100%,0_100%,0_5px)]"
                    />
                    <input
                        aria-label="Value"
                        value={value}
                        onChange={(e) => setValue(e.target.value)}
                        className={clsx("ml-[27px] h-[23px] w-[33px] bg-white pb-1 pl-[3px] outline-none", SUNKEN)}
                    />
                </div>
                <div className="mt-[6px] flex pl-px">
                    <span className="flex-1">Opaque</span>
                    <span className="w-[121px]">Transparent</span>
                </div>
                <div className="mt-3.5 flex gap-[33px] pl-[39px]">
                    <button className={clsx("h-[23px] w-[75px] border border-[#696969] pb-0.5", RAISED)}>OK</button>
                    <button className={clsx("h-[23px] w-[75px] pb-0.5", RAISED)}>Cancel</button>
                </div>
            </div>
        </div>
    );
}

/* ---------- window ---------- */

const menus = ["File", "Edit", "View", "Project", "Draw", "Modeler", "HFSS", "Tools", "Window", "Help"];

const childControls = [
    { label: "Minimize child window", d: "M5 11.5h6" },
    { label: "Restore child window", d: "M5 8.5h6v4h-6zM7 8V5.5h5v4h-1" },
    { label: "Close child window", d: "M6 6l6 6M12 6l-6 6" },
];

function TitleBar() {
    return (
        <header className="shrink-0 bg-white">
            <div className="flex h-[18px] items-center text-[#999999]">
                <svg width="16" height="16" viewBox="0 0 16 16" className="ml-px">
                    <circle cx="8" cy="8" r="7.5" fill="#4a1a94" />
                    <path d="M3 11L6 4l2 4l2-5l3 8" stroke="#fff" strokeWidth="1.5" fill="none" />
                    <path d="M5 12l3-6l3 6" stroke="#e03a8a" fill="none" />
                </svg>
                <h1 className="ml-[5px] flex-1 text-[13px]">
                    ANSYS HFSS - RFID - HFSSDesign1 - 3D Modeler - [RFID - HFSSDesign1 - Modeler]
                </h1>
                <div className="mr-[19px] flex items-center gap-9">
                    <button aria-label="Minimize">
                        <svg width="10" height="10" viewBox="0 0 10 10">
                            <path d="M0 4.5h10" stroke="#808080" />
                        </svg>
                    </button>
                    <button aria-label="Restore">
                        <svg width="10" height="10" viewBox="0 0 10 10">
                            <path d="M0.5 2.5h7v7h-7zM2.5 2V0.5h7v7H8" stroke="#808080" fill="none" />
                        </svg>
                    </button>
                    <button aria-label="Close">
                        <CloseX color="#808080" />
                    </button>
                </div>
            </div>
            <div className="flex h-5 items-center pt-[3px] text-[#606060]">
                <svg width="16" height="14" viewBox="0 0 16 14" className="ml-1.5">
                    <path d="M0.5 0.5h14v12h-14z" fill="#f4f8fc" stroke="#a8b0b8" />
                    <path d="M2 2h6v9H2z" fill="#3a8a94" />
                    <path d="M10 3h3M10 5h3M10 7h3" stroke="#c8c8c8" />
                </svg>
                <nav className="ml-[7px] flex gap-[15px]">
                    {menus.map((menu) => (
                        <button key={menu}>{menu}</button>
                    ))}
                </nav>
                <div className="ml-auto flex gap-px pr-px">
                    {childControls.map(({ label, d }) => (
                        <button key={label} aria-label={label} className="h-[17px] w-[18px] bg-[#e5e5e5]">
                            <svg width="18" height="17" viewBox="0 0 18 17">
                                <path d={d} stroke="#8a9aaa" strokeWidth="1.5" fill="none" />
                            </svg>
                        </button>
                    ))}
                </div>
            </div>
        </header>
    );
}

export default function App() {
    return (
        <div className="relative flex h-screen flex-col overflow-hidden bg-[#f0f0f0] font-['Noto_Sans','Noto_Sans_CJK_SC',sans-serif] text-xs leading-4 text-black">
            <TitleBar />
            <div className="h-8 shrink-0">
                <Toolbar bands={topBands} />
            </div>
            <div className="h-[30px] shrink-0">
                <Toolbar bands={secondBands} />
            </div>

            <div className="flex min-h-0 flex-1 pb-[5px]">
                <Sidebar />
                <div className="ml-0.5 w-[3px] shrink-0 border-l border-white" />
                <div className="w-[289px] shrink-0 border-t-2 border-l-2 border-[#696969] bg-white">
                    <Tree rows={modelRows} rowHeight="h-5" label="Model tree" />
                </div>
                <div className="w-1 shrink-0" />
                <ModelView />
                <div className="w-0.5 shrink-0" />
            </div>

            <div className="flex h-[152px] shrink-0 border-t-2 border-[#808080] pt-0.5">
                <section className="mb-px flex w-1/2 pr-1.5">
                    <SideCaption title="Message Manager" />
                    <div className="mt-px mb-0.5 ml-px flex-1 border border-[#828790] bg-white" />
                </section>
                <section className="flex flex-1 border-l-2 border-[#808080] pr-1 pl-px">
                    <SideCaption title="Progress" />
                    <div className="mt-px mb-0.5 ml-px flex-1 border-t-2 border-r border-b border-l-2 border-[#696969] border-r-[#e3e3e3] border-b-[#e3e3e3] bg-white" />
                </section>
            </div>

            <footer className="flex h-5 shrink-0 items-end border-t border-[#a0a0a0] leading-[18px] shadow-[inset_0_1px_#ffffff]">
                <span className="h-4 flex-1 pl-px">Ready</span>
                <div className="flex gap-0.5">
                    <div className="h-4 w-[29px] border-t border-l border-[#a0a0a0]" />
                    <div className="h-4 w-[37px] border-t border-l border-[#a0a0a0] pl-px leading-4">NUM</div>
                    <div className="h-4 w-[34px] border-t border-l border-[#a0a0a0]" />
                </div>
            </footer>

            <PropertiesDialog />
            <TransparencyDialog />
        </div>
    );
}
